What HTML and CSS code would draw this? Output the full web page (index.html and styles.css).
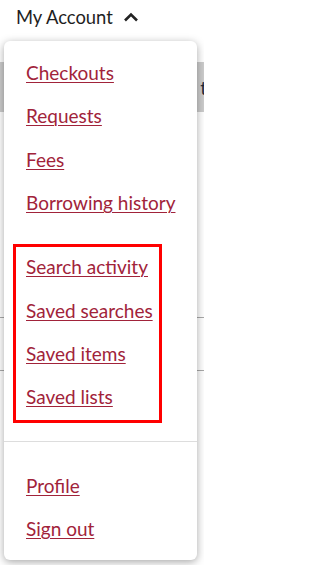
FILE: index.html
```html
<!DOCTYPE html>
<html>
<head>
<meta charset="utf-8">
<link rel="stylesheet" href="styles.css">
</head>
<body>
<div class="page">
  <header class="topbar">
    <button class="acct-toggle">My Account
      <svg class="chev" width="16" height="10" viewBox="0 0 16 10"><path d="M2 8.5 L8 2.5 L14 8.5" fill="none" stroke="#222" stroke-width="2.6"/></svg>
    </button>
  </header>
  <div class="content">
    <div class="band"><span class="band-text">t</span></div>
    <div class="rule rule-a"></div>
    <div class="rule rule-b"></div>
  </div>
  <nav class="menu">
    <ul class="section">
      <li><a href="#">Checkouts</a></li>
      <li><a href="#">Requests</a></li>
      <li><a href="#">Fees</a></li>
      <li><a href="#">Borrowing history</a></li>
    </ul>
    <ul class="section section-2">
      <li><a href="#">Search activity</a></li>
      <li><a href="#">Saved searches</a></li>
      <li><a href="#">Saved items</a></li>
      <li><a href="#">Saved lists</a></li>
    </ul>
    <hr class="divider">
    <ul class="section">
      <li><a href="#">Profile</a></li>
      <li><a href="#">Sign out</a></li>
    </ul>
    <div class="highlight"></div>
  </nav>
</div>
</body>
</html>
```

FILE: styles.css
```css
html, body {
  margin: 0;
  padding: 0;
  background: #fff;
}
body {
  font-family: Lato, "Liberation Sans", sans-serif;
  width: 204px;
  height: 565px;
  overflow: hidden;
}
.page {
  position: relative;
  height: 565px;
}
.topbar {
  height: 33px;
  display: flex;
  align-items: center;
  padding-left: 16px;
}
.acct-toggle {
  border: 0;
  background: none;
  padding: 0;
  font: inherit;
  font-size: 18.4px;
  color: #1e1e1e;
  display: flex;
  align-items: center;
  gap: 10px;
}
.chev {
  display: block;
}
.content {
  padding-top: 29px;
}
.band {
  height: 50px;
  background: #cccccc;
  display: flex;
  justify-content: flex-end;
  align-items: center;
  font-size: 19px;
  color: #1e2a3a;
}
.band-text {
  margin-right: -3px;
}
.rule {
  height: 1px;
  background: #a9a9a9;
}
.rule-a {
  margin-top: 205px;
}
.rule-b {
  margin-top: 52px;
}
.menu {
  position: absolute;
  left: 4px;
  top: 41px;
  width: 193px;
  height: 519px;
  background: #fff;
  border-radius: 6px;
  box-shadow: 0 2px 8px rgba(0, 0, 0, 0.35);
  box-sizing: border-box;
}
.section {
  list-style: none;
  margin: 0;
  padding: 10px 0;
}
.section-2 {
  padding-top: 10.5px;
}
.section li {
  padding: 10px 0 10px 22px;
  font-size: 19px;
  line-height: 23.4px;
}
.section a {
  color: #a1233a;
  text-decoration: underline;
  text-decoration-thickness: 1px;
  text-underline-offset: 2px;
}
.divider {
  border: 0;
  height: 1px;
  background: #dddddd;
  margin: 12px 0 12px 0;
}
.highlight {
  position: absolute;
  left: 9px;
  top: 203px;
  width: 143px;
  height: 173px;
  border: 3px solid #ff0000;
}
```
